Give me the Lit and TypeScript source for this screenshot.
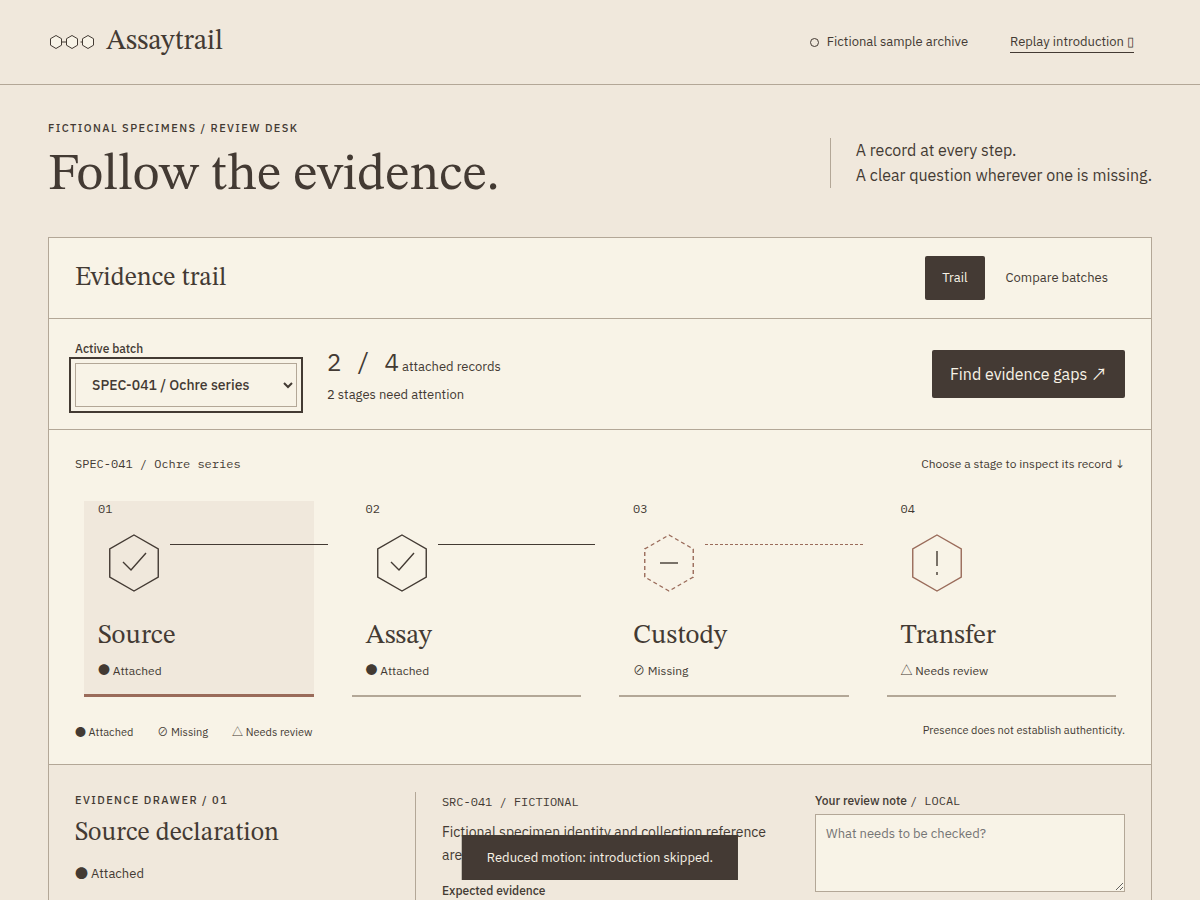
import { LitElement, html, css, svg, nothing } from "lit";
import { customElement, property, state } from "lit/decorators.js";
import { classMap } from "lit/directives/class-map.js";

type Status = "attached" | "missing" | "review";

interface Stage {
  no: string;
  name: string;
  status: Status;
}

const STATUS: Record<Status, { glyph: string; label: string }> = {
  attached: { glyph: "●", label: "Attached" },
  missing: { glyph: "⊘", label: "Missing" },
  review: { glyph: "△", label: "Needs review" },
};

const STAGES: Stage[] = [
  { no: "01", name: "Source", status: "attached" },
  { no: "02", name: "Assay", status: "attached" },
  { no: "03", name: "Custody", status: "missing" },
  { no: "04", name: "Transfer", status: "review" },
];

const MARKS: Record<Status, unknown> = {
  attached: svg`<path class="mark" d="M25 35 33 43 48 26" />`,
  missing: svg`<path class="mark" d="M27 36h18" />`,
  review: svg`<path class="mark" d="M36 24v15M36 45v3" />`,
};

const glyphStyles = css`
  .glyph {
    font-family: "Noto Sans CJK JP", sans-serif;
    line-height: 1;
  }
`;

const statusText = (s: Status) =>
  html`<span class="glyph">${STATUS[s].glyph}</span> ${STATUS[s].label}`;

@customElement("stage-card")
export class StageCard extends LitElement {
  static styles = [
    glyphStyles,
    css`
      :host {
        display: block;
      }
      .card {
        display: block;
        width: 100%;
        height: 196px;
        padding: 0 14px;
        border: 0;
        border-bottom: 2px solid #b3a797;
        background: none;
        color: inherit;
        font: inherit;
        text-align: left;
        cursor: pointer;
      }
      .card.active {
        background: #f0e8dc;
        border-bottom: 3px solid #9a6b5a;
      }
      .inner {
        display: flex;
        flex-direction: column;
        height: 100%;
      }
      .no {
        font: 12px/15px "IBM Plex Mono", "Liberation Mono", monospace;
      }
      .figure {
        display: flex;
        margin: 11px -28px 0 0;
      }
      .hex {
        flex: none;
        width: 72px;
        height: 72px;
        fill: none;
        stroke: #433a33;
        stroke-width: 1.4;
      }
      .outline.missing,
      .outline.review {
        stroke: #9a6b5a;
      }
      .outline.missing {
        stroke-dasharray: 4 3;
      }
      .link {
        flex: 1;
        height: 0;
        margin-top: 17px;
        border-top: 1px solid #433a33;
      }
      .link.missing {
        border-top: 1px dashed #9a6b5a;
      }
      .name {
        margin-top: 20px;
        font: 27px/34px "STIX Two Text", "Liberation Serif", serif;
      }
      .status {
        margin-top: 8px;
        font-size: 12px;
        line-height: 20px;
      }
    `,
  ];

  @property({ attribute: false }) stage!: Stage;
  @property({ type: Boolean }) active = false;
  @property({ type: Boolean }) last = false;

  render() {
    const { no, name, status } = this.stage;
    return html`<button
      class=${classMap({ card: true, active: this.active })}
      type="button"
      aria-pressed=${this.active}
    >
      <span class="inner">
        <span class="no">${no}</span>
        <span class="figure">
          <svg class="hex" viewBox="0 0 72 72" aria-hidden="true">
            <path
              class="outline ${status}"
              d="M36 8 60.25 22V50L36 64 11.75 50V22Z"
            />
            ${MARKS[status]}
          </svg>
          ${this.last ? nothing : html`<span class="link ${status}"></span>`}
        </span>
        <span class="name">${name}</span>
        <span class="status">${statusText(status)}</span>
      </span>
    </button>`;
  }
}

@customElement("app-root")
export class AppRoot extends LitElement {
  static styles = [
    glyphStyles,
    css`
      :host {
        display: block;
        min-height: 100vh;
        background: #f0e8dc;
        color: #433a33;
        font: 16px/24px "IBM Plex Sans", Roboto, sans-serif;
      }
      *,
      *::before {
        box-sizing: border-box;
      }
      h1,
      h2,
      h3,
      p,
      ul,
      ol {
        margin: 0;
        padding: 0;
        font-weight: 400;
        list-style: none;
      }
      button,
      select,
      textarea {
        font: inherit;
        color: inherit;
      }
      h1,
      h2,
      .brand {
        font-family: "STIX Two Text", "Liberation Serif", serif;
      }
      .mono {
        font-family: "IBM Plex Mono", "Liberation Mono", monospace;
        font-size: 12px;
        line-height: 20px;
        font-weight: 400;
      }
      .eyebrow {
        font-size: 11px;
        line-height: 16px;
        font-weight: 500;
        letter-spacing: 0.13em;
        text-transform: uppercase;
      }
      .top {
        display: flex;
        align-items: center;
        justify-content: space-between;
        height: 85px;
        padding: 0 48px;
        border-bottom: 1px solid #b3a797;
      }
      .brand {
        display: flex;
        align-items: center;
        gap: 10px;
        color: inherit;
        font-size: 28px;
        line-height: 36px;
        text-decoration: none;
      }
      .brand svg {
        width: 48px;
        height: 20px;
        fill: #f8f3e7;
        stroke: #433a33;
      }
      .top-side {
        display: flex;
        align-items: center;
        gap: 42px;
        padding-right: 18px;
        font-size: 13px;
        line-height: 20px;
      }
      .archive {
        display: flex;
        align-items: center;
        gap: 8px;
      }
      .archive::before {
        content: "";
        width: 9px;
        height: 9px;
        border: 1px solid currentColor;
        border-radius: 50%;
      }
      .replay {
        padding: 0;
        border: 0;
        border-bottom: 1px solid currentColor;
        background: none;
        cursor: pointer;
      }
      main {
        padding: 35px 48px 48px;
      }
      .hero {
        display: flex;
        align-items: center;
        justify-content: space-between;
        padding-bottom: 32px;
      }
      h1 {
        font-size: 52px;
        line-height: 60px;
        margin-top: 9px;
      }
      .lede {
        padding-left: 25px;
        border-left: 1px solid #b3a797;
        line-height: 25px;
      }
      .panel {
        border: 1px solid #b3a797;
        background: #f8f3e7;
      }
      .panel-head {
        display: flex;
        align-items: center;
        justify-content: space-between;
        padding: 18px 26px;
        border-bottom: 1px solid #b3a797;
      }
      h2 {
        font-size: 26px;
        line-height: 34px;
      }
      .tabs {
        display: flex;
        gap: 4px;
        font-size: 13px;
      }
      .tab {
        min-height: 44px;
        padding: 0 17px;
        border: 0;
        border-radius: 2px;
        background: none;
        cursor: pointer;
      }
      .tab.on,
      .gaps {
        background: #443a34;
        color: #f8f3e7;
      }
      .toolbar {
        display: flex;
        align-items: center;
        gap: 30px;
        min-height: 111px;
        padding: 20px 26px;
        border-bottom: 1px solid #b3a797;
      }
      .field {
        display: flex;
        flex-direction: column;
        align-self: flex-start;
        gap: 4px;
      }
      .field label {
        font-size: 12px;
        line-height: 20px;
        font-weight: 500;
      }
      .batch {
        width: 222px;
        height: 44px;
        padding: 0 12px;
        border: 1px solid #b3a797;
        border-radius: 0;
        outline: 2px solid #433a33;
        outline-offset: 4px;
        background: #f8f3e7;
        font-size: 14px;
        font-weight: 500;
      }
      .tally {
        flex: 1;
        font-size: 13px;
        line-height: 20px;
      }
      .tally p:first-child {
        line-height: 36px;
      }
      .tally strong {
        font: 24px/36px "IBM Plex Mono", "Liberation Mono", monospace;
      }
      .gaps {
        height: 48px;
        padding: 0 18px;
        border: 0;
        border-radius: 2px;
        cursor: pointer;
      }
      .trail {
        padding: 24px 26px 22px;
        border-bottom: 1px solid #b3a797;
      }
      .row {
        display: flex;
        align-items: flex-start;
        justify-content: space-between;
        font-size: 12px;
        line-height: 20px;
      }
      .stages {
        display: grid;
        grid-template-columns: repeat(4, 1fr);
        gap: 38px;
        padding: 27px 9px 25px;
      }
      .legend,
      .fine {
        font-size: 11px;
      }
      .legend {
        display: flex;
        gap: 24px;
      }
      .fine {
        line-height: 16px;
      }
      .drawer {
        display: grid;
        grid-template-columns: 1.1fr 1.12fr 1fr;
        gap: 26px;
        padding: 27px 26px;
        background: #f0e8dc;
      }
      .drawer .field {
        align-self: stretch;
      }
      .drawer .field label,
      .drawer .field .mono {
        line-height: 18px;
      }
      .summary {
        border-right: 1px solid #b3a797;
      }
      .summary h2 {
        margin: 8px 0 12px;
      }
      .summary .state {
        font-size: 13px;
      }
      .detail p {
        margin: 9px 0 14px;
        font-size: 14px;
        line-height: 23px;
      }
      .detail h3 {
        font-size: 12px;
        line-height: 20px;
        font-weight: 500;
      }
      .note {
        height: 78px;
        padding: 9px 10px;
        border: 1px solid #b3a797;
        background: #f8f3e7;
        font-size: 13px;
        line-height: 20px;
        resize: vertical;
      }
      .toast {
        position: fixed;
        left: 50%;
        bottom: 20px;
        transform: translateX(-50%);
        padding: 12px 24px;
        border: 1px solid #433a33;
        background: #443a34;
        color: #f8f3e7;
        font-size: 13px;
        line-height: 19px;
        white-space: nowrap;
      }
    `,
  ];

  @state() private selected = 0;

  render() {
    return html`
      <header class="top">
        <a class="brand" href="#">
          <svg viewBox="0 0 48 20" aria-hidden="true">
            <path d="M13.5 10h5M32.5 10h2" />
            <path
              d="M8 3.5 13.5 6.7V13.2L8 16.5 2.5 13.2V6.7ZM24 3.5 29.5 6.7V13.2L24 16.5 18.5 13.2V6.7ZM40 3.5 45.5 6.7V13.2L40 16.5 34.5 13.2V6.7Z"
            />
          </svg>
          Assaytrail
        </a>
        <div class="top-side">
          <span class="archive">Fictional sample archive</span>
          <button class="replay" type="button">Replay introduction ▯</button>
        </div>
      </header>
      <main>
        <section class="hero">
          <div>
            <p class="eyebrow">Fictional specimens / Review desk</p>
            <h1>Follow the evidence.</h1>
          </div>
          <p class="lede">
            A record at every step.<br />A clear question wherever one is missing.
          </p>
        </section>
        <section class="panel">
          <header class="panel-head">
            <h2>Evidence trail</h2>
            <div class="tabs">
              <button class="tab on" type="button">Trail</button>
              <button class="tab" type="button">Compare batches</button>
            </div>
          </header>
          <div class="toolbar">
            <div class="field">
              <label for="batch">Active batch</label>
              <select id="batch" class="batch">
                <option>SPEC-041 / Ochre series</option>
              </select>
            </div>
            <div class="tally">
              <p><strong>2 / 4</strong> attached records</p>
              <p>2 stages need attention</p>
            </div>
            <button class="gaps" type="button">
              Find evidence gaps <span class="glyph">↗</span>
            </button>
          </div>
          <div class="trail">
            <div class="row">
              <span class="mono">SPEC-041 / Ochre series</span>
              <span>Choose a stage to inspect its record ↓</span>
            </div>
            <div class="stages">
              ${STAGES.map(
                (stage, i) => html`<stage-card
                  .stage=${stage}
                  ?active=${i === this.selected}
                  ?last=${i === STAGES.length - 1}
                  @click=${() => (this.selected = i)}
                ></stage-card>`,
              )}
            </div>
            <div class="row">
              <ul class="legend">
                ${(Object.keys(STATUS) as Status[]).map(
                  (s) => html`<li>${statusText(s)}</li>`,
                )}
              </ul>
              <span class="fine">Presence does not establish authenticity.</span>
            </div>
          </div>
          <div class="drawer">
            <div class="summary">
              <p class="eyebrow">Evidence drawer / 01</p>
              <h2>Source declaration</h2>
              <p class="state">${statusText("attached")}</p>
            </div>
            <div class="detail">
              <div class="mono">SRC-041 / FICTIONAL</div>
              <p>Fictional specimen identity and collection reference are attached.</p>
              <h3>Expected evidence</h3>
            </div>
            <div class="field">
              <label for="note">Your review note <span class="mono">/ LOCAL</span></label>
              <textarea id="note" class="note" placeholder="What needs to be checked?"></textarea>
            </div>
          </div>
        </section>
      </main>
      <div class="toast" role="status">Reduced motion: introduction skipped.</div>
    `;
  }
}
